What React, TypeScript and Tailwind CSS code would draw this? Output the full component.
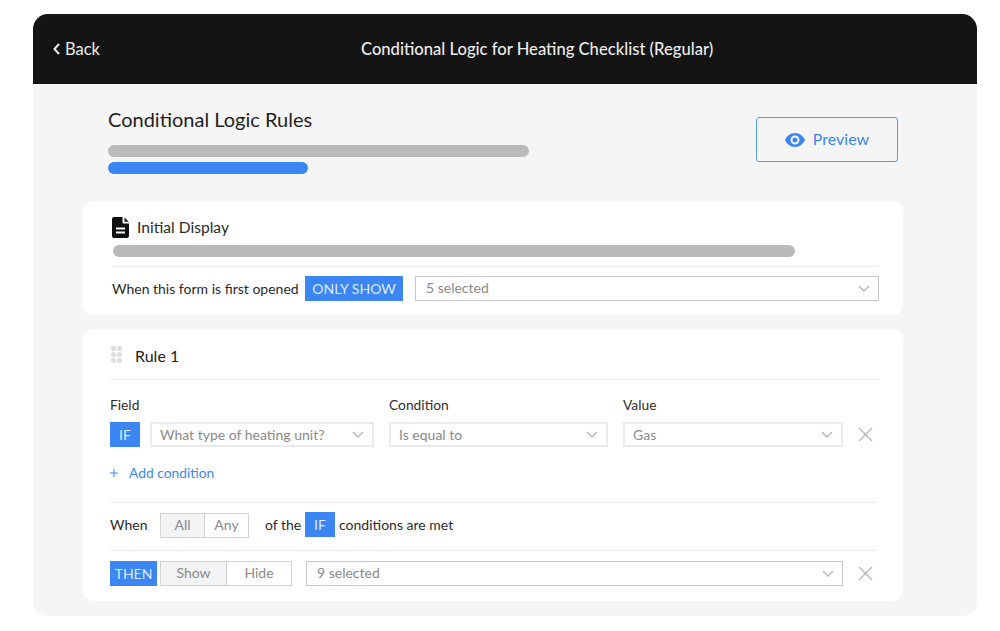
const font = "[font-family:'Lato','Noto_Sans',sans-serif]";

function Chevron() {
  return (
    <svg width="12" height="7" viewBox="0 0 12 7" fill="none" stroke="#b4b4b4" strokeWidth="1.4">
      <path d="M1 1l5 5 5-5" />
    </svg>
  );
}

function Select({ text, className, dark }: { text: string; className: string; dark?: boolean }) {
  return (
    <div
      className={`flex h-[25px] items-center justify-between pr-[8px] text-[14px] text-[#8a8a8a] ${dark ? "border-[1.5px] border-[#c8c8c8] pl-[10px]" : "border-2 border-[#ebebeb] pl-[8px]"} ${className}`}
    >
      <span className={dark ? "pb-[2px]" : ""}>{text}</span>
      <Chevron />
    </div>
  );
}

function Badge({ text, className }: { text: string; className: string }) {
  return (
    <div className={`flex h-[25px] items-center justify-center bg-[#3b86f2] text-[14px] text-[#dcebff] ${className}`}>
      {text}
    </div>
  );
}

function Toggle({ a, b, wa, wb }: { a: string; b: string; wa: string; wb: string }) {
  return (
    <div className="flex h-[25px] border-[1.5px] border-[#d2d2d2] pb-0 text-[14px] text-[#8a8a8a]">
      <div className={`flex items-center justify-center border-r-[1.5px] border-[#d2d2d2] bg-[#f1f3f5] pb-[2px] ${wa}`}>{a}</div>
      <div className={`flex items-center justify-center pb-[2px] ${wb}`}>{b}</div>
    </div>
  );
}

function Close() {
  return (
    <svg width="15" height="15" viewBox="0 0 15 15" fill="none" stroke="#b8b8b8" strokeWidth="1.4" className="ml-[15px]">
      <path d="M1 1l13 13M14 1L1 14" />
    </svg>
  );
}

export default function App() {
  return (
    <div className={`h-[631px] w-[1000px] overflow-hidden bg-white pl-[33px] pt-[14px] ${font}`}>
      <div className="h-[602px] w-[944px] overflow-hidden rounded-[15px] bg-[#f5f5f5]">
        <header className="flex h-[70px] items-center bg-[#141414] pl-[20px] text-[#ececec]">
          <div className="flex items-center text-[16.5px]">
            <svg width="7" height="12" viewBox="0 0 7 12" fill="none" stroke="currentColor" strokeWidth="2">
              <path d="M6 1L1.5 6 6 11" />
            </svg>
            <span className="ml-[5px]">Back</span>
          </div>
          <div className="ml-[261px] text-[16.6px] font-medium">
            Conditional Logic for Heating Checklist (Regular)
          </div>
        </header>

        <div className="flex w-[870px] flex-col pl-[50px]">
          <div className="flex justify-between pl-[25px] pr-[5px] pt-[23px]">
            <div className="flex flex-col">
              <h1 className="h-[24px] text-[20px] leading-[24px] text-[#1f1f1f]">Conditional Logic Rules</h1>
              <div className="mt-[14px] h-[12px] w-[421px] rounded-full bg-[#bababa]" />
              <div className="mt-[5px] h-[12px] w-[200px] rounded-full bg-[#3b86f2]" />
            </div>
            <button className="mt-[10px] flex h-[45px] w-[142px] items-center justify-center gap-[8px] rounded-[3px] border-[1.5px] border-[#5b9af2] text-[16px] text-[#3b86f2]">
              <svg width="20" height="14" viewBox="0 0 20 14" fill="currentColor">
                <path d="M10 0C5.6 0 1.8 2.8 0 7c1.8 4.2 5.6 7 10 7s8.2-2.8 10-7c-1.8-4.2-5.6-7-10-7Zm0 11.5A4.5 4.5 0 1 1 10 2.5a4.5 4.5 0 0 1 0 9Zm0-7a2.5 2.5 0 1 0 0 5 2.5 2.5 0 0 0 0-5Z" />
              </svg>
              <span className="pb-[2px]">Preview</span>
            </button>
          </div>

          <section className="mt-[27px] flex h-[114px] flex-col rounded-[10px] bg-white pl-[29px] pr-[24px] pt-[16px]">
            <div className="flex h-[21px] items-center gap-[8px]">
              <svg width="17" height="21" viewBox="0 0 17 21" fill="#0f0f0f">
                <path d="M2 0h8.5v5.5a1 1 0 0 0 1 1H17V19a2 2 0 0 1-2 2H2a2 2 0 0 1-2-2V2a2 2 0 0 1 2-2Zm10.5.4L16.7 4.8h-4.2V.4ZM4 10.5v2h9v-2H4Zm0 4v2h9v-2H4Z" />
              </svg>
              <span className="text-[15.6px] text-[#2a2a2a]">Initial Display</span>
            </div>
            <div className="ml-[1px] mt-[7px] h-[12px] w-[682px] rounded-full bg-[#bababa]" />
            <div className="mt-[9px] h-px bg-[#ececec]" />
            <div className="mt-[9px] flex items-center">
              <span className="w-[193px] pb-[1px] text-[14px] text-[#2a2a2a]">When this form is first opened</span>
              <Badge text="ONLY SHOW" className="w-[98px]" />
              <Select text="5 selected" dark className="ml-[12px] w-[464px]" />
            </div>
          </section>

          <section className="mt-[14px] flex h-[272px] flex-col rounded-[10px] bg-white pl-[27px] pr-[25px]">
            <div className="flex h-[50px] shrink-0 items-center gap-[13px] pl-[1px]">
              <div className="grid grid-cols-2 gap-[1px]">
                {[0, 1, 2, 3, 4, 5].map((i) => (
                  <span key={i} className="h-[5px] w-[5px] rounded-full bg-[#dcdcdc]" />
                ))}
              </div>
              <span className="pt-[3px] text-[16px] text-[#222]">Rule 1</span>
            </div>
            <div className="h-px bg-[#ececec]" />

            <div className="mt-[16px] flex h-[18px] items-center text-[13.8px] text-[#2e2e2e]">
              <span className="w-[279px]">Field</span>
              <span className="w-[234px]">Condition</span>
              <span>Value</span>
            </div>
            <div className="mt-[8px] flex items-center">
              <Badge text="IF" className="w-[30px]" />
              <Select text="What type of heating unit?" className="ml-[10px] w-[224px]" />
              <Select text="Is equal to" className="ml-[15px] w-[219px]" />
              <Select text="Gas" className="ml-[15px] w-[220px]" />
              <Close />
            </div>
            <div className="mt-[17px] flex h-[18px] items-center text-[13.8px] text-[#3b86f2]">
              <svg width="8" height="8" viewBox="0 0 8 8" fill="none" stroke="currentColor" strokeWidth="1">
                <path d="M4 0v8M0 4h8" />
              </svg>
              <span className="ml-[11px]">Add condition</span>
            </div>
            <div className="mt-[20px] h-px bg-[#ececec]" />

            <div className="mt-[10px] flex h-[25px] items-center text-[14px] text-[#2a2a2a]">
              <span className="w-[50px] pb-[2px]">When</span>
              <Toggle a="All" b="Any" wa="w-[44px]" wb="w-[43px]" />
              <span className="ml-[16px] w-[40px] pb-[2px]">of the</span>
              <Badge text="IF" className="-mt-[1px] w-[30px] self-start" />
              <span className="ml-[4px] pb-[2px]">conditions are met</span>
            </div>
            <div className="mt-[12px] h-px bg-[#ececec]" />

            <div className="mt-[10px] flex items-center">
              <Badge text="THEN" className="w-[47px]" />
              <div className="ml-[3px]">
                <Toggle a="Show" b="Hide" wa="w-[66px]" wb="w-[64px]" />
              </div>
              <Select text="9 selected" dark className="ml-[14px] w-[537px]" />
              <Close />
            </div>
          </section>
        </div>
      </div>
    </div>
  );
}
